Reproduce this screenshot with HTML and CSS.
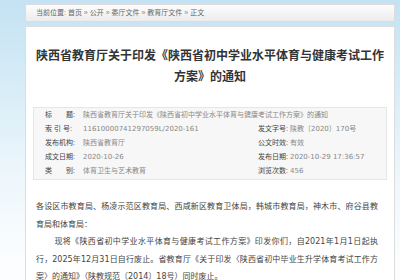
FILE: index.html
```html
<!DOCTYPE html>
<html lang="zh-CN">
<head>
  <meta charset="UTF-8">
  <meta name="viewport" content="width=device-width, initial-scale=1.0">
  <title>陕西省教育厅关于印发《陕西省初中学业水平体育与健康考试工作方案》的通知</title>
  <link rel="stylesheet" href="styles.css">
</head>
<body>

<div class="wrap">
  <div class="crumb">
    当前位置: <a href="#">首页</a> <span class="sep">»</span> <a href="#">公开</a> <span class="sep">»</span> <a href="#">委厅文件</a> <span class="sep">»</span> <a href="#">教育厅文件</a> <span class="sep">»</span> 正文
  </div>

  <div class="article">
    <h1 class="title">陕西省教育厅关于印发《陕西省初中学业水平体育与健康考试工作方案》的通知</h1>

    <div class="meta">
      <div class="meta-row full">
        <span class="label">标　　题:</span>
        <span class="value">陕西省教育厅关于印发《陕西省初中学业水平体育与健康考试工作方案》的通知</span>
      </div>
      <div class="meta-row">
        <span class="label">索 引 号:</span>
        <span class="value">11610000741297059L/2020-161</span>
      </div>
      <div class="meta-row">
        <span class="label label-r">发文字号:</span>
        <span class="value">陕教〔2020〕170号</span>
      </div>
      <div class="meta-row">
        <span class="label">发布机构:</span>
        <span class="value">陕西省教育厅</span>
      </div>
      <div class="meta-row">
        <span class="label label-r">公文时效:</span>
        <span class="value">有效</span>
      </div>
      <div class="meta-row">
        <span class="label">成文日期:</span>
        <span class="value">2020-10-26</span>
      </div>
      <div class="meta-row">
        <span class="label label-r">发布日期:</span>
        <span class="value">2020-10-29 17:36:57</span>
      </div>
      <div class="meta-row">
        <span class="label">类　　别:</span>
        <span class="value">体育卫生与艺术教育</span>
      </div>
      <div class="meta-row">
        <span class="label label-r">浏览次数:</span>
        <span class="value">456</span>
      </div>
    </div>

    <div class="content">
      <p class="addressee">各设区市教育局、杨凌示范区教育局、西咸新区教育卫体局，韩城市教育局，神木市、府谷县教育局和体育局：</p>
      <p class="indent">现将《陕西省初中学业水平体育与健康考试工作方案》印发你们，自2021年1月1日起执行，2025年12月31日自行废止。省教育厅《关于印发〈陕西省初中毕业生升学体育考试工作方案〉的通知》（陕教规范〔2014〕18号）同时废止。</p>
    </div>
  </div>
</div>

</body>
</html>
```

FILE: styles.css
```css
body {
  margin: 0;
  padding: 0;
  font-family: "DejaVu Sans", "Noto Sans CJK SC", sans-serif;
  color: #333;
  background: linear-gradient(180deg, #c4e2f3 0%, #d8edf8 90px, #eef7fc 180px, #fbfdfe 260px);
  height: 280px;
  overflow: hidden;
}

a {
  color: inherit;
  text-decoration: none;
}

.wrap {
  margin: 0 5px 0 25px;
  padding-top: 4px;
}

.crumb {
  height: 16px;
  line-height: 16px;
  padding-left: 10px;
  font-family: "Liberation Sans", "Noto Sans CJK SC", sans-serif;
  font-size: 7px;
  color: #666;
  border: 1px solid #dcdcdc;
  background: linear-gradient(180deg, #fdfdfd 0%, #ececec 100%);
}

.crumb .sep {
  color: #888;
}

.article {
  margin-top: 4px;
  padding: 0 7px;
  height: 260px;
  background-color: #fff;
  border: 1px solid #ddd;
}

.title {
  margin: 18px 0 0;
  font-family: "Noto Sans CJK SC", sans-serif;
  font-size: 12px;
  line-height: 20.5px;
  font-weight: bold;
  text-align: center;
  color: #333;
}

.meta {
  display: grid;
  grid-template-columns: 213px 1fr;
  margin-top: 21px;
  padding: 0 0 1px 11px;
  background-color: #f7f7f7;
  border: 1px solid #e6e6e6;
  font-size: 7px;
  line-height: 14px;
}

.meta-row {
  display: flex;
  white-space: nowrap;
}

.meta-row.full {
  grid-column: 1 / 3;
}

.label {
  width: 38px;
  flex-shrink: 0;
  font-family: "Liberation Sans", "Noto Sans CJK SC", sans-serif;
  color: #444;
}

.label-r {
  width: 32px;
}

.value {
  color: #888;
}

.content {
  margin-top: 18px;
  padding: 0 9px 0 3px;
  font-size: 8px;
  line-height: 17.5px;
  text-align: justify;
  color: #444;
}

.content p {
  margin: 0;
}

.indent {
  text-indent: 2.3em;
}
```
